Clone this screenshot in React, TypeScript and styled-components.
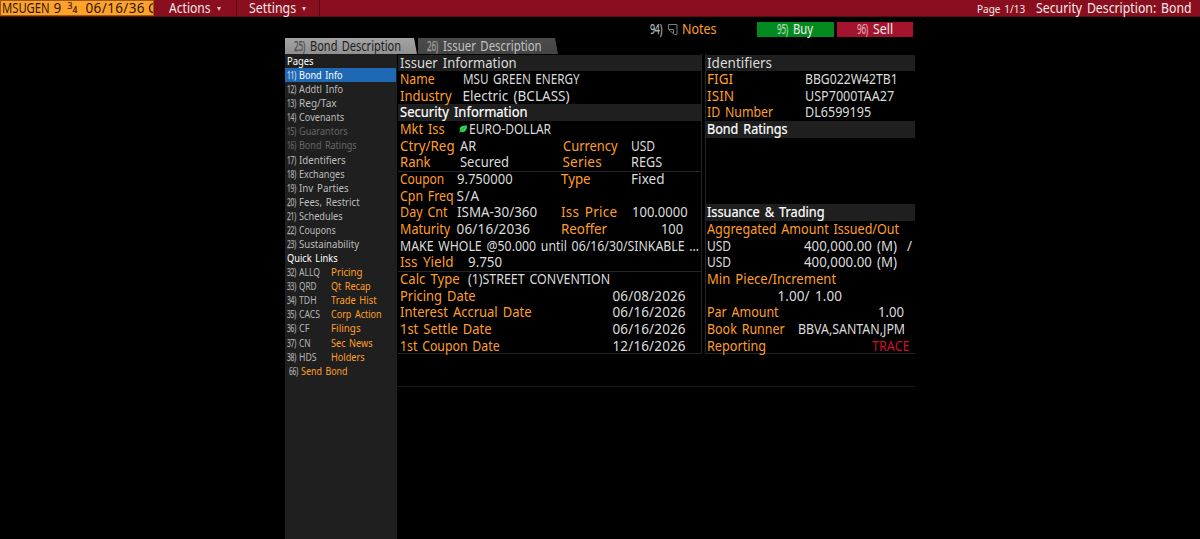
import React, { useLayoutEffect, useRef } from "react";
import styled, { createGlobalStyle } from "styled-components";

const AMBER = "#ff9f28";
const LIGHT = "#dcdcdc";

const Global = createGlobalStyle`
  * { box-sizing: border-box; }
  html, body { margin: 0; background: #000; overflow: hidden; }
  body { font-family: "Noto Sans", "Open Sans", sans-serif; font-size: 13.5px; color: ${LIGHT}; }
`;

/* Text tracked or condensed so that it fills its terminal cells. */
const TextBox = styled.span<{ $w: number }>`
  display: inline-block;
  flex: none;
  width: ${(p) => p.$w}px;
  white-space: pre;
`;
const Tracked = styled.span<{ $color?: string; $strong?: boolean }>`
  display: inline-block;
  white-space: pre;
  word-spacing: 0.13em;
  transform-origin: left center;
  color: ${(p) => p.$color ?? "inherit"};
  -webkit-text-stroke: ${(p) => (p.$strong ? "0.2px currentColor" : "0")};
`;

type TextProps = { w: number; color?: string; strong?: boolean; children: string };

function Text({ w, color, strong, children }: TextProps) {
  const ref = useRef<HTMLSpanElement>(null);
  useLayoutEffect(() => {
    const el = ref.current!;
    el.style.letterSpacing = "0px";
    el.style.transform = "none";
    const natural = el.getBoundingClientRect().width;
    const target = w + 0.6;
    if (natural > target) {
      el.style.transform = `scaleX(${target / natural})`;
    } else {
      el.style.letterSpacing = `${(target - natural) / Math.max(children.length - 1, 1)}px`;
    }
  }, [w, children]);
  return (
    <TextBox $w={w}>
      <Tracked ref={ref} $color={color} $strong={strong}>
        {children}
      </Tracked>
    </TextBox>
  );
}

/* Narrow hot-key number such as 11) */
const KeyBox = styled.span<{ $w: number; $color: string }>`
  display: inline-block;
  flex: none;
  width: ${(p) => p.$w}px;
  color: ${(p) => p.$color};
  white-space: nowrap;
`;
const KeyGlyphs = styled.span<{ $squeeze: number }>`
  display: inline-block;
  letter-spacing: -0.4px;
  transform: scaleX(${(p) => p.$squeeze});
  transform-origin: left center;
  -webkit-text-stroke: 0.25px currentColor;
`;
type HotKeyProps = { n: number; w: number; color?: string; squeeze?: number };
const HotKey = ({ n, w, color = "#a9a9a9", squeeze = 0.6 }: HotKeyProps) => (
  <KeyBox $w={w} $color={color}>
    <KeyGlyphs $squeeze={squeeze}>{n})</KeyGlyphs>
  </KeyBox>
);

const Screen = styled.div`
  height: 539px;
  display: flex;
  flex-direction: column;
  background: #000;
`;

const TopBar = styled.header`
  height: 17px;
  flex: none;
  display: flex;
  background: #890f1e;
  border-bottom: 1px solid #5c0a14;
  line-height: 16px;
  color: #f4e9ea;
`;
const Ticker = styled.div`
  width: 154px;
  height: 16px;
  padding-left: 1px;
  display: flex;
  overflow: hidden;
  background: #ffa12b;
  border: 1px solid #9c5a10;
  color: #2a1a05;
  line-height: 14.5px;
  white-space: nowrap;
`;
const TickerPart = styled.div<{ $w: number }>`
  width: ${(p) => p.$w}px;
  flex: none;
`;
const Fraction = styled.div`
  width: 18px;
  flex: none;
  display: flex;
  font-size: 8.5px;
  line-height: 10px;
  -webkit-text-stroke: 0.2px currentColor;
  span + span { padding-top: 4px; }
`;
const MenuItem = styled.div<{ $w: number; $pad: number; $gap: number }>`
  width: ${(p) => p.$w}px;
  padding-left: ${(p) => p.$pad}px;
  display: flex;
  align-items: center;
  gap: ${(p) => p.$gap}px;
  border-right: 1px solid #4d0810;
`;
const Caret = styled.i`
  margin-top: 1px;
  border: 2.5px solid transparent;
  border-top: 4px solid #e6c9cc;
  border-bottom: 0;
`;
const TopRight = styled.div`
  margin-left: auto;
  width: 223px;
  display: flex;
`;
const PageNo = styled.div`
  width: 58.5px;
  flex: none;
  font-size: 11.5px;
  line-height: 18px;
`;

const Actions = styled.div`
  height: 21px;
  flex: none;
  display: flex;
  padding: 5px 0 0 650px;
  line-height: 15px;
`;
const Notes = styled.div`
  width: 107px;
  display: flex;
  svg { margin: 2px 4px 0 0; flex: none; }
`;
const Trade = styled.button<{ $bg: string; $w: number }>`
  width: ${(p) => p.$w}px;
  height: 15px;
  margin-right: 3px;
  padding: 0 0 0 20px;
  display: flex;
  border: 0;
  background: ${(p) => p.$bg};
  font: inherit;
  line-height: 15px;
  color: #f0f0f0;
`;

const Tabs = styled.nav`
  height: 16px;
  flex: none;
  display: flex;
  gap: 1px;
  padding-left: 285px;
`;
const Tab = styled.div<{ $w: number; $active?: boolean }>`
  width: ${(p) => p.$w}px;
  padding-left: 9px;
  display: flex;
  line-height: 16px;
  background: ${(p) => (p.$active ? "linear-gradient(#a3a3a3, #909090)" : "linear-gradient(#4c4c4c, #444)")};
  color: ${(p) => (p.$active ? "#1c1c1c" : "#c2c2c2")};
  clip-path: polygon(0 0, calc(100% - 3px) 0, 100% 100%, 0 100%);
`;

const Body = styled.main`
  flex: 1;
  min-height: 0;
  display: flex;
  padding-left: 285px;
`;
const Sidebar = styled.aside`
  width: 112px;
  flex: none;
  background: #1f1f1f;
  font-size: 11.2px;
`;
const SideRow = styled.div<{ $active?: boolean; $indent?: number }>`
  height: 14.08px;
  margin-right: 1px;
  padding-left: ${(p) => p.$indent ?? 2}px;
  display: flex;
  line-height: 14px;
  background: ${(p) => (p.$active ? "#1f69b4" : "transparent")};
`;
const Mnemonic = styled.div`
  width: 31.5px;
  flex: none;
`;

const Content = styled.section`
  width: 518px;
  height: 333px;
  padding: 0 0 0 1px;
  display: flex;
  gap: 3px;
  border-bottom: 1px solid #1a1a1a;
`;
const Panel = styled.div<{ $w: number; $side: "left" | "right" }>`
  width: ${(p) => p.$w}px;
  height: 300px;
  padding-top: 0.5px;
  border-bottom: 1px solid #242424;
  border-${(p) => p.$side}: 1px solid #242424;
`;
const Row = styled.div<{ $cols: string; $pad: number; $header?: boolean; $rule?: boolean }>`
  height: 16.67px;
  padding-left: ${(p) => p.$pad}px;
  display: grid;
  grid-template-columns: ${(p) => p.$cols};
  line-height: 17.4px;
  background: ${(p) => (p.$header ? "#1f1f1f" : "transparent")};
  box-shadow: ${(p) => (p.$rule ? "inset 0 1px #242424" : "none")};
  white-space: nowrap;
`;

type Cell = { t: string; x: number; w: number; c?: string; leaf?: boolean };
type Line = { cells: Cell[]; header?: boolean; strong?: boolean; rule?: boolean };

const label = (t: string, w: number, x = 0): Cell => ({ t, w, x, c: AMBER });
const value = (t: string, w: number, x: number): Cell => ({ t, w, x });

const ISSUER: Line[] = [
  { header: true, cells: [value("Issuer Information", 116, 0)] },
  { cells: [label("Name", 34), value("MSU GREEN ENERGY", 116, 62.5)] },
  { cells: [label("Industry", 51), value("Electric (BCLASS)", 106.5, 62.5)] },
  { header: true, strong: true, cells: [value("Security Information", 127, 0)] },
  { cells: [label("Mkt Iss", 44), { t: "EURO-DOLLAR", w: 81.5, x: 58.5, leaf: true }] },
  { cells: [label("Ctry/Reg", 54), value("AR", 15.5, 60), label("Currency", 54, 162.5), value("USD", 23.5, 230.5)] },
  { cells: [label("Rank", 30), value("Secured", 48.5, 60), label("Series", 38.5, 162.5), value("REGS", 30.5, 230.5)] },
  { rule: true, cells: [label("Coupon", 43.5), value("9.750000", 55, 56.5), label("Type", 29, 161), value("Fixed", 33, 231)] },
  { cells: [label("Cpn Freq", 53), value("S/A", 22, 56.5)] },
  { cells: [label("Day Cnt", 47), value("ISMA-30/360", 79.5, 56.5), label("Iss Price", 55.5, 161), value("100.0000", 55, 231.5)] },
  { cells: [label("Maturity", 49.5), value("06/16/2036", 73, 56.5), label("Reoffer", 45.5, 161), value("100", 21.5, 260.5)] },
  { cells: [value("MAKE WHOLE @50.000 until 06/16/30/SINKABLE …", 298.5, 0)] },
  { cells: [label("Iss Yield", 53), value("9.750", 33.5, 67.5)] },
  { rule: true, cells: [label("Calc Type", 59), value("(1)STREET CONVENTION", 141.5, 67.5)] },
  { cells: [label("Pricing Date", 75), value("06/08/2026", 72.5, 212.5)] },
  { cells: [label("Interest Accrual Date", 131), value("06/16/2026", 72.5, 212.5)] },
  { cells: [label("1st Settle Date", 91), value("06/16/2026", 72.5, 212.5)] },
  { cells: [label("1st Coupon Date", 99), value("12/16/2026", 72.5, 212.5)] },
];

const TRADING: Line[] = [
  { header: true, cells: [value("Identifiers", 64.5, 0)] },
  { cells: [label("FIGI", 25.5), value("BBG022W42TB1", 92, 98)] },
  { cells: [label("ISIN", 26.5), value("USP7000TAA27", 88.5, 98)] },
  { cells: [label("ID Number", 65.5), value("DL6599195", 65.5, 98)] },
  { header: true, strong: true, cells: [value("Bond Ratings", 80, 0)] },
  { cells: [] },
  { cells: [] },
  { cells: [] },
  { cells: [] },
  { header: true, strong: true, cells: [value("Issuance & Trading", 117, 0)] },
  { cells: [label("Aggregated Amount Issued/Out", 191.5)] },
  { cells: [value("USD", 23.5, 0), value("400,000.00 (M)", 92.5, 96.5), value("/", 6, 200)] },
  { cells: [value("USD", 23.5, 0), value("400,000.00 (M)", 92.5, 96.5)] },
  { cells: [label("Min Piece/Increment", 128.5)] },
  { cells: [value("1.00/ 1.00", 64, 70.5)] },
  { cells: [label("Par Amount", 71), value("1.00", 25.5, 171)] },
  { cells: [label("Book Runner", 77), value("BBVA,SANTAN,JPM", 106.5, 90.5)] },
  { cells: [label("Reporting", 58.5), { t: "TRACE", w: 37, x: 164.5, c: "#c8102e" }] },
];

const PAGES: [number, string, number][] = [
  [11, "Bond Info", 43],
  [12, "Addtl Info", 43.5],
  [13, "Reg/Tax", 37],
  [14, "Covenants", 44.5],
  [15, "Guarantors", 48],
  [16, "Bond Ratings", 57],
  [17, "Identifiers", 46],
  [18, "Exchanges", 45],
  [19, "Inv Parties", 49],
  [20, "Fees, Restrict", 60],
  [21, "Schedules", 43],
  [22, "Coupons", 36],
  [23, "Sustainability", 59.5],
];

const LINKS: [number, string, number, string, number][] = [
  [32, "ALLQ", 20.5, "Pricing", 31],
  [33, "QRD", 17, "Qt Recap", 39],
  [34, "TDH", 17, "Trade Hist", 45],
  [35, "CACS", 20.5, "Corp Action", 50],
  [36, "CF", 10, "Filings", 29],
  [37, "CN", 11, "Sec News", 41],
  [38, "HDS", 17, "Holders", 33],
];

const LeafSvg = styled.svg`
  margin-right: 2px;
`;
const Leaf = () => (
  <LeafSvg width="8" height="9" viewBox="0 0 8 9">
    <path d="M7.9 0.3C6 1 0.7 0.3 0.7 4.3c0 .8.1 1.2.3 1.7L.2 7.2l.6.5 1-1C5.8 7.8 8.4 4.8 7.9.3Z" fill="#2ad455" />
    <path d="M1.5 6.2 5.5 2.6" stroke="#0f7a2c" strokeWidth=".6" />
  </LeafSvg>
);

const NoteIcon = () => (
  <svg width="11" height="11" viewBox="0 0 11 11" fill="none" stroke="#7c7c7c">
    <path d="M1.5 5V.5h8.500v10H7.5L1.5 5.5H6.5v4" />
  </svg>
);

function Lines({ rows, pad }: { rows: Line[]; pad: number }) {
  return (
    <>
      {rows.map((row, i) => {
        const cols = row.cells
          .map((c, j) => (j + 1 < row.cells.length ? `${row.cells[j + 1].x - c.x}px` : "auto"))
          .join(" ");
        const lead = row.cells[0]?.x ?? 0;
        return (
          <Row key={i} $cols={cols || "auto"} $pad={pad + lead} $header={row.header} $rule={row.rule}>
            {row.cells.map((c, j) => (
              <div key={j}>
                {c.leaf && <Leaf />}
                <Text w={c.w} color={row.strong ? "#fff" : c.c} strong={row.strong}>
                  {c.t}
                </Text>
              </div>
            ))}
          </Row>
        );
      })}
    </>
  );
}

export default function App() {
  return (
    <Screen>
      <Global />
      <TopBar>
        <Ticker>
          <TickerPart $w={51.5}><Text w={47}>MSUGEN</Text></TickerPart>
          <TickerPart $w={14}>9</TickerPart>
          <Fraction><span>3</span><span>4</span></Fraction>
          <TickerPart $w={62.5}><Text w={58.5}>06/16/36</Text></TickerPart>
          <TickerPart $w={8}>C</TickerPart>
        </Ticker>
        <MenuItem $w={83} $pad={15} $gap={6.5}><Text w={41}>Actions</Text><Caret /></MenuItem>
        <MenuItem $w={83} $pad={12} $gap={6}><Text w={46.5}>Settings</Text><Caret /></MenuItem>
        <TopRight>
          <PageNo><Text w={47.5}>Page 1/13</Text></PageNo>
          <Text w={155}>Security Description: Bond</Text>
        </TopRight>
      </TopBar>
      <Actions>
        <Notes>
          <HotKey n={94} w={17} squeeze={0.66} color="#b4b8bc" />
          <NoteIcon />
          <Text w={34} color={AMBER}>Notes</Text>
        </Notes>
        <Trade $bg="#038a1f" $w={77}><HotKey n={95} w={16} color="#a8d8b0" /><Text w={19.5}>Buy</Text></Trade>
        <Trade $bg="#a3132d" $w={76}><HotKey n={96} w={15.5} color="#dfa3ad" /><Text w={19.5}>Sell</Text></Trade>
      </Actions>
      <Tabs>
        <Tab $w={132} $active><HotKey n={25} w={15.5} color="#4a4a4a" /><Text w={90.5}>Bond Description</Text></Tab>
        <Tab $w={140}><HotKey n={26} w={15.5} color="#a0a0a0" /><Text w={98}>Issuer Description</Text></Tab>
      </Tabs>
      <Body>
        <Sidebar>
          <SideRow><Text w={26} color="#fff">Pages</Text></SideRow>
          {PAGES.map(([n, name, w]) => {
            const muted = n === 15 || n === 16;
            return (
              <SideRow key={n} $active={n === 11}>
                <HotKey n={n} w={12.3} color={muted ? "#666" : n === 11 ? "#c9dcf0" : "#a9a9a9"} />
                <Text w={w} color={muted ? "#666" : n === 11 ? "#fff" : "#bdbdbd"}>{name}</Text>
              </SideRow>
            );
          })}
          <SideRow><Text w={50} color="#fff">Quick Links</Text></SideRow>
          {LINKS.map(([n, code, cw, name, w]) => (
            <SideRow key={n}>
              <HotKey n={n} w={12.3} />
              <Mnemonic><Text w={cw} color="#b5b5b5">{code}</Text></Mnemonic>
              <Text w={w} color={AMBER}>{name}</Text>
            </SideRow>
          ))}
          <SideRow $indent={4}>
            <HotKey n={66} w={12} />
            <Text w={46} color={AMBER}>Send Bond</Text>
          </SideRow>
        </Sidebar>
        <Content>
          <Panel $w={304} $side="right"><Lines rows={ISSUER} pad={2} /></Panel>
          <Panel $w={210} $side="left"><Lines rows={TRADING} pad={1} /></Panel>
        </Content>
      </Body>
    </Screen>
  );
}
